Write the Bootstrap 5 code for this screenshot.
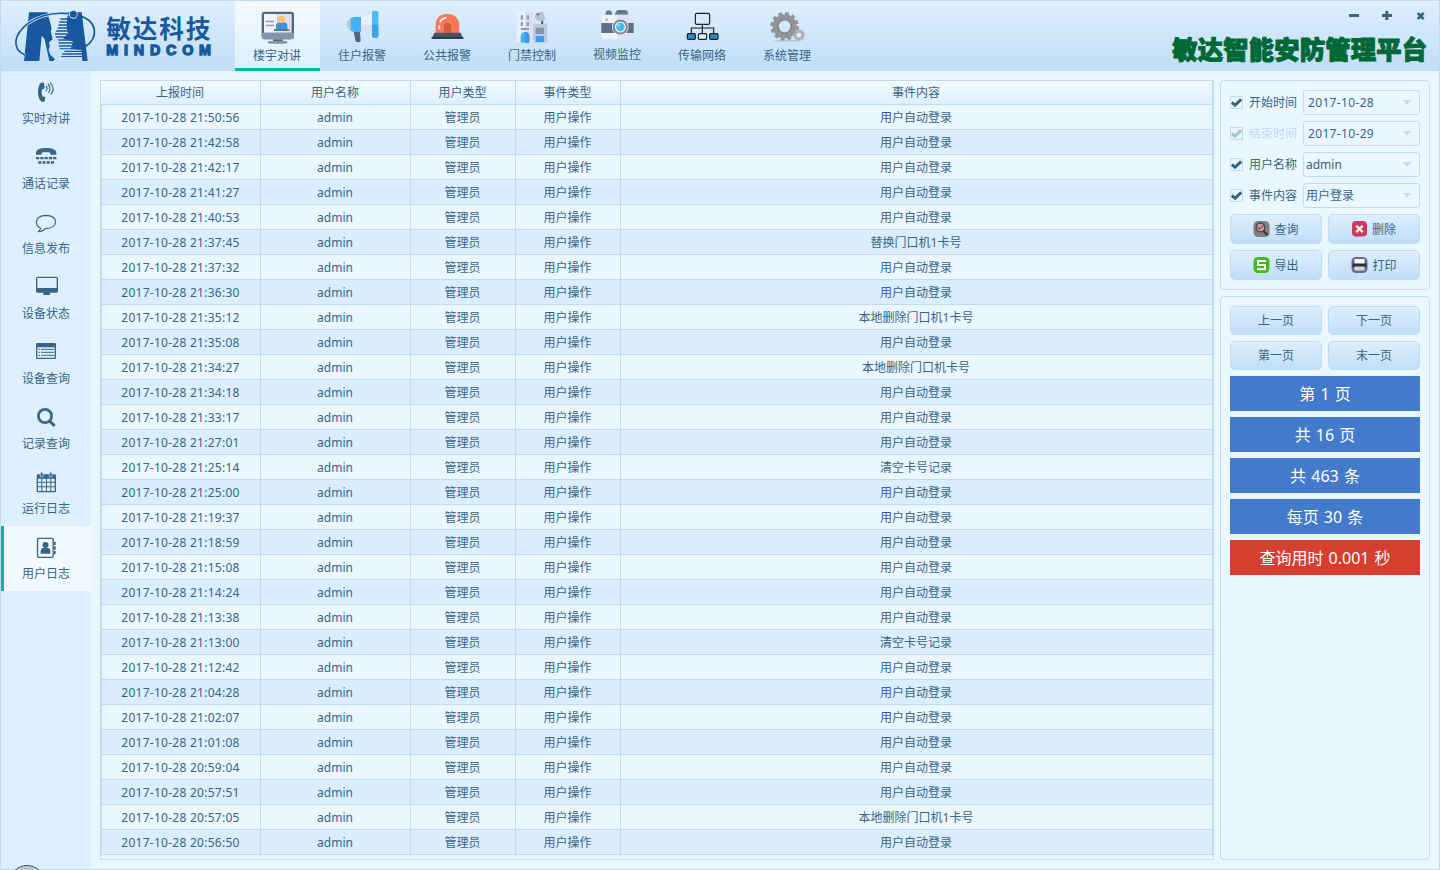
<!DOCTYPE html>
<html lang="zh-CN">
<head>
<meta charset="utf-8">
<title>敏达智能安防管理平台</title>
<meta name="viewport" content="width=device-width, initial-scale=1">
<link rel="stylesheet" href="https://cdn.jsdelivr.net/npm/bootstrap@5.3.0/dist/css/bootstrap.min.css">
<style>
:root{--line:#c0dcf2;--ink:#386487;--teal:#00bb9e}
body{font-family:"Noto Sans","Noto Sans CJK SC",sans-serif;font-size:12px;line-height:16px;color:var(--ink);background:#eaf7ff;overflow:hidden}
.window{height:870px;border:1px solid var(--line)}
.topbar{height:70px;background:linear-gradient(#deeffe,#c0def6)}
svg{display:block;flex:none}
.tab{width:85px;height:70px;color:var(--ink);text-align:center;text-decoration:none}
.tab.active{background:linear-gradient(#f3faff,#deeffe);border-bottom:3px solid var(--teal)}
.tab.raised span{margin-top:-1px}
.tab span{display:block;padding-right:1px}
.side{width:90px;background:#deeffe}
.side-item{height:65px;color:var(--ink);text-align:center;text-decoration:none;line-height:20px}
.side-item svg{fill:var(--ink)}
.side-item.active{background:#f2f9ff;box-shadow:inset 3px 0 var(--teal)}
.side-item span{display:block}
.grid-panel{width:1114px;border:1px solid var(--line)}
.log{width:1112px;table-layout:fixed;border-collapse:separate;border-spacing:0;text-align:center;margin:0}
.log th,.log td{padding:0 1px 0 0;border-right:1px solid var(--line);border-bottom:1px solid var(--line);font-weight:400;text-align:center}
.log th{height:24px;line-height:23px;background:linear-gradient(#f3faff,#deeffe)}
.log td{height:25px;line-height:22px;padding-top:2px}
.log td:first-child{border-left:1px solid var(--line)}
.log tbody tr:nth-child(even){background:#daeeff}
.num{letter-spacing:.26px}
.right{width:210px}
.box{border:1px solid var(--line);border-radius:4px;padding:9px;gap:6px}
.filter{height:25px}
.filter.off .lbl{color:#bfdcf3}
.tick{width:13px;height:13px;border:1px solid var(--line);color:var(--ink);margin-right:6px}
.lbl{width:54px;white-space:nowrap}
.combo{width:117px;height:25px;border:1px solid var(--line);border-radius:3px;padding:0 8px 0 2px}
.combo.num{padding-left:4px;letter-spacing:.34px}
.combo::after{content:"";border:4.5px solid transparent;border-top:5px solid var(--line);border-bottom:0}
.tool{width:92px;height:30px;padding:0;border:1px solid var(--line);border-radius:5px;background:linear-gradient(#deeffe,#c0def6);color:var(--ink);font-size:12px;line-height:16px}
.tool.act{padding-top:1px}
.tool.act svg{margin-top:-1px}
.tool.low{height:29px}
.bar{height:35px;line-height:36px;font-size:16px;text-align:center;color:#fff;background:#437acc;word-spacing:1px}
.bar.time{background:#d63e2f}
.orb{position:absolute;left:9px;top:865px;width:36px;height:36px;border:1px solid #2b587c;border-radius:50%;background:#b9c9d6}
</style>
</head>
<body>
<div class="window d-flex flex-column position-relative">
<header class="topbar d-flex flex-shrink-0">
  <svg width="234" height="70" viewBox="3 3 702 210">
    <g fill="#17589f">
      <path d="M87 37H142L150 66 155 86 152 94 158 118 147 127 149 140 146 150 151 164 165 178 160 183H148L134 118 125 107 118 183H72Z"/>
      <path d="M203 37H245L263 183H247L245 150 212 148 218 124 190 116 204 100 200 84Z"/>
      <path d="M182 55h22v4h-24zM178 64h28v4h-29zM176 73h28v4h-29zM174 82h28v4h-29zM169 91h34v4h-36zM165 100h38v4h-38zM167 109h32v4h-31zM174 118h42v4h-41zM176 127h40v4h-40zM177 136h38v4h-38zM179 145h36v3h-36zM194 152h52v4h-54zM188 160h60v4h-62zM184 168h66v3h-68z"/>
    </g>
    <path d="M76 166C32 145 42 103 84 70C116 48 160 38 206 43" fill="none" stroke="#d3e8fb" stroke-width="9"/>
    <path d="M76 166C32 145 42 103 84 70C116 48 160 36 206 41M234 46C294 62 298 112 254 141" fill="none" stroke="#17589f" stroke-width="5"/>
    <circle cx="220" cy="43" r="13" fill="#d3e8fb"/><circle cx="220" cy="43" r="10.500" fill="#17589f"/>
    <text x="319" y="114" font-family="Noto Sans CJK SC" font-weight="700" font-size="74" textLength="312" fill="#17589f">敏达科技</text>
    <text x="319" y="164" font-family="Liberation Sans" font-weight="700" font-size="43" textLength="314" stroke="#17589f" stroke-width="4" fill="#17589f">MINDCOM</text>
  </svg>
  <nav class="d-flex">
    <a class="tab active"><svg width="85" height="47" viewBox="15 3 255 141">
      <rect x="95" y="35" width="97" height="83" rx="9" fill="#52677f"/><path d="M95 98h97v11q0 9-9 9H104q-9 0-9-9z" fill="#8496a9"/>
      <path d="M102 42h41v56h-41z" fill="#f0f2fd"/><path d="M143 42h42v56h-42z" fill="#dde1f2"/>
      <path d="M107 62h25v5h-25zM107 74h25v5h-25z" fill="#8d9caf"/><path d="M138 88V78q0-11 12-11h10q12 0 12 11v10z" fill="#3f91e6"/><circle cx="155" cy="58" r="11" fill="#ffc36b"/>
      <path d="M132 87h46v6h-46z" fill="#65778c"/><path d="M129 118h29v6h-29z" fill="#52677f"/><rect x="114" y="123" width="58" height="8" rx="4" fill="#8496a9"/></svg><span>楼宇对讲</span></a>
    <a class="tab"><svg width="85" height="47" viewBox="270 3 255 141">
      <path d="M371 94h19l2 28q-1 5-8 5-7 0-8-6z" fill="#52677f"/><path d="M364 53q-14 8-14 20t14 20z" fill="#c0c7da"/><path d="M362 55l10-4h21v45h-21l-10-4z" fill="#46b1f5"/><path d="M393 51q18-1 34-12v35h-34z" fill="#eaeefd"/><path d="M393 74h34v32q-16-10-34-10z" fill="#dce1f1"/><rect x="426" y="32" width="19" height="82" rx="8" fill="#4cb8ff"/><path d="M426 74h19v32q0 8-9.500 8t-9.500-8z" fill="#3ea2e6"/></svg><span>住户报警</span></a>
    <a class="tab"><svg width="85" height="47" viewBox="525 3 255 141">
      <path d="M617 101V74q2-32 35-32t36 32v27z" fill="#fb7757"/><path d="M642 98V77q0-9 10-9t11 9v21z" fill="#d45b3b"/><path d="M628 88V76M630 67q4-11 19-14" stroke="#fff" stroke-width="5" fill="none"/><path d="M613 98h79l8 19h-95z" fill="#465464"/><path d="M605 111h95v6h-95z" fill="#2f3c4b"/></svg><span>公共报警</span></a>
    <a class="tab"><svg width="85" height="47" viewBox="-30 3 255 141">
      <rect x="50" y="34" width="50" height="94" rx="5" fill="#ebf0fe"/><path d="M75 34h20q5 0 5 5v89H75z" fill="#dbe1f3"/>
      <path d="M62 46h7v13h-7zM80 46h7v13h-7zM62 66h7v12h-7zM80 66h7v12h-7zM63 84h24v6H63z" fill="#8f9db1"/><path d="M62 128v-19q0-13 13-13t13 13v19z" fill="#46b1f5"/><path d="M75 96q13 0 13 13v19H75z" fill="#369be9"/>
      <rect x="99" y="71" width="43" height="57" rx="4" fill="#c0c9df"/><path d="M123 59h7v13h-7z" fill="#52677f"/><path d="M107 83h25v19h-25z" fill="#8292a8"/><path d="M107 108h25v18h-25z" fill="#4299f1"/><path d="M107 43q3-5 7-4l13-6q8 12 8 24-4 8-13 7-14-2-18-14z" fill="#b8c1d3"/><circle cx="114" cy="43" r="4" fill="#6c7c90"/></svg><span>门禁控制</span></a>
    <a class="tab raised"><svg width="85" height="47" viewBox="225 3 255 141">
      <path d="M317 47v-9q1-7 9-7t10 7v9zM343 47l5-12q2-5 7-5h21q5 0 7 5l3 12z" fill="#65788e"/><rect x="304" y="44" width="97" height="74" rx="12" fill="#edf2ff"/><path d="M352 44h37q12 0 12 12v50q0 12-12 12h-37z" fill="#dde3f3"/><path d="M304 69h97v30h-97z" fill="#5d7087"/><circle cx="320" cy="59" r="3.500" fill="#72cd3f"/><circle cx="361" cy="81" r="25" fill="#e2e9f5"/><circle cx="361" cy="81" r="22.500" fill="#75869c"/><circle cx="361" cy="81" r="16.500" fill="#edf3fc"/><circle cx="361" cy="81" r="12.500" fill="#40b9ee"/><circle cx="356" cy="76" r="4" fill="#8ddcfc"/></svg><span>视频监控</span></a>
    <a class="tab"><svg width="85" height="47" viewBox="480 3 255 141">
      <g fill="none" stroke="#171f28" stroke-width="3.500"><rect x="586" y="40" width="43" height="33" rx="5"/><path d="M607 73v27M574 100V84h67v16"/></g><g fill="#348ac4" stroke="#171f28" stroke-width="3.500"><rect x="562" y="101" width="24" height="17" rx="3"/><rect x="595" y="101" width="25" height="17" rx="3" fill="#e2eefa"/><rect x="629" y="101" width="25" height="17" rx="3"/></g></svg><span>传输网络</span></a>
    <a class="tab"><svg width="85" height="47" viewBox="735 3 255 141">
      <ellipse cx="862" cy="122" rx="42" ry="3" fill="#b4c7d7"/><circle cx="854" cy="79" r="27" fill="none" stroke="#929597" stroke-width="19"/><circle cx="854" cy="79" r="38.500" fill="none" stroke="#929597" stroke-width="9" stroke-dasharray="11.300 8.850"/><circle cx="854" cy="79" r="21" fill="none" stroke="#7d8082" stroke-width="3"/>
      <circle cx="897" cy="105" r="11" fill="none" stroke="#acafb1" stroke-width="8"/><circle cx="897" cy="105" r="15.500" fill="none" stroke="#acafb1" stroke-width="5" stroke-dasharray="5 4.740"/><circle cx="897" cy="105" r="7" fill="#e4edf4"/></svg><span>系统管理</span></a>
  </nav>
  <svg class="ms-auto" width="289" height="70" viewBox="0 3 867 210">
    <path d="M597 42h30v9h-30zM696 42h10V33h9v9h11v9h-11v9h-9v-9h-10z" fill="#386487"/><path d="M803 39l18 18M821 39l-18 18" stroke="#386487" stroke-width="8"/>
    <text x="67" y="177" font-family="Noto Sans CJK SC" font-weight="900" font-size="76" textLength="764" fill="#006837" stroke="#006837" stroke-width="3" stroke-linejoin="round">敏达智能安防管理平台</text>
  </svg>
</header>
<div class="d-flex flex-grow-1">
  <aside class="side d-flex flex-column">
    <a class="side-item"><svg width="90" height="38" viewBox="3 3 270 114"><path d="M121 40q8-5 11 0l2 13q-2 5-8 5-4 11 2 22 6-2 8 3l-2 11q-5 4-11 0-8-9-9-26 0-18 7-28z"/><path d="M138 48q6 7 0 15M144 42q11 13 1 27M150 38q18 18 2 36" fill="none" stroke="#386487" stroke-width="3.500"/></svg><span>实时对讲</span></a>
    <a class="side-item"><svg width="90" height="38" viewBox="3 198 270 114"><path d="M108 254v-8q3-12 30-12t31 12v8h-17l-3-7h-22l-3 7z"/><path d="M108 264.500h61" stroke="#386487" stroke-width="7" stroke-dasharray="9.600 3.250"/><path d="M115 277.500h47" stroke="#386487" stroke-width="8" stroke-dasharray="9 3.600"/></svg><span>通话记录</span></a>
    <a class="side-item"><svg width="90" height="38" viewBox="3 393 270 114"><path d="M122 475Q109 468 109 456q2-19 29-20 28 1 29 20-2 19-31 20-8 9-22 9 6-3 8-10z" fill="none" stroke="#386487" stroke-width="3.500"/></svg><span>信息发布</span></a>
    <a class="side-item"><svg width="90" height="38" viewBox="3 588 270 114"><path fill-rule="evenodd" d="M113 620h56q5 0 5 5v38q0 5-5 5h-20l1 4v3h-20v-3l1-4h-18q-5 0-5-5v-38q0-5 5-5zm-1 4v30h58v-30z"/></svg><span>设备状态</span></a>
    <a class="side-item"><svg width="90" height="38" viewBox="3 3 270 114"><path fill-rule="evenodd" d="M112 39h52q4 0 4 4v40q0 4-4 4h-52q-4 0-4-4V43q0-4 4-4zm0 13v31h52V52z"/><path d="M115 58h5M123 58h39M115 67h5M123 67h39M115 76h5M123 76h39" stroke="#386487" stroke-width="3"/></svg><span>设备查询</span></a>
    <a class="side-item"><svg width="90" height="38" viewBox="3 198 270 114"><circle cx="135" cy="258" r="20" fill="none" stroke="#386487" stroke-width="8"/><path d="M149 273l15 15" stroke="#386487" stroke-width="9"/></svg><span>记录查询</span></a>
    <a class="side-item"><svg width="90" height="38" viewBox="3 393 270 114"><path fill-rule="evenodd" d="M114 433h50q4 0 4 4v46q0 4-4 4h-50q-4 0-4-4v-46q0-4 4-4zm0 13v9h10v-9zm13 0v9h11v-9zm14 0v9h10v-9zm13 0v9h10v-9zm-40 12v11h10v-11zm13 0v11h11v-11zm14 0v11h10v-11zm13 0v11h10v-11zm-40 14v11h10v-11zm13 0v11h11v-11zm14 0v11h10v-11zm13 0v11h10v-11z"/><rect x="121" y="427" width="8" height="14" rx="3" stroke="#deeffe" stroke-width="2"/><rect x="148" y="427" width="8" height="14" rx="3" stroke="#deeffe" stroke-width="2"/></svg><span>运行日志</span></a>
    <a class="side-item active"><svg width="90" height="38" viewBox="3 588 270 114"><rect x="112.500" y="625" width="47" height="57" rx="3" fill="none" stroke="#386487" stroke-width="4"/><path d="M162 635h5v10h-5zM162 649h5v10h-5zM162 663h5v10h-5zM122 671v-9q1-8 8-8h13q8 0 8 8v9z"/><circle cx="136.500" cy="645" r="9"/></svg><span>用户日志</span></a>
  </aside>
  <main class="d-flex flex-grow-1" style="padding:9px;gap:6px">
    <section class="grid-panel">
      <table class="log">
        <colgroup><col style="width:160px"><col style="width:150px"><col style="width:105px"><col style="width:105px"><col></colgroup>
        <thead><tr><th>上报时间</th><th>用户名称</th><th>用户类型</th><th>事件类型</th><th>事件内容</th></tr></thead>
        <tbody id="rows"></tbody>
      </table>
    </section>
    <aside class="right d-flex flex-column" style="gap:6px">
      <div class="box d-flex flex-column">
        <div class="filter d-flex align-items-center"><i class="tick"><svg width="11" height="11" viewBox="0 0 11 11"><path d="M.8 5.500L4 8.300 10.200 2.400" fill="none" stroke="currentColor" stroke-width="3"/></svg></i><span class="lbl">开始时间</span><div class="combo num d-flex align-items-center justify-content-between">2017-10-28</div></div>
        <div class="filter off d-flex align-items-center"><i class="tick"><svg width="11" height="11" viewBox="0 0 11 11"><path d="M.8 5.500L4 8.300 10.200 2.400" fill="none" stroke="#a5c3dc" stroke-width="3"/></svg></i><span class="lbl">结束时间</span><div class="combo num d-flex align-items-center justify-content-between">2017-10-29</div></div>
        <div class="filter d-flex align-items-center"><i class="tick"><svg width="11" height="11" viewBox="0 0 11 11"><path d="M.8 5.500L4 8.300 10.200 2.400" fill="none" stroke="currentColor" stroke-width="3"/></svg></i><span class="lbl">用户名称</span><div class="combo d-flex align-items-center justify-content-between">admin</div></div>
        <div class="filter d-flex align-items-center"><i class="tick"><svg width="11" height="11" viewBox="0 0 11 11"><path d="M.8 5.500L4 8.300 10.200 2.400" fill="none" stroke="currentColor" stroke-width="3"/></svg></i><span class="lbl">事件内容</span><div class="combo d-flex align-items-center justify-content-between">用户登录</div></div>
        <div class="d-flex justify-content-between">
          <button class="tool act d-flex align-items-center justify-content-center"><svg class="me-1" width="17" height="17" viewBox="0 0 17 17"><rect x=".5" y="0" width="16" height="16" rx="4.500" fill="#7f7f7f"/><circle cx="7.500" cy="6.500" r="4.300" fill="#a9a9a9" stroke="#444" stroke-width="1.300"/><path d="M10.500 10l4 4" stroke="#333" stroke-width="2"/><path d="M4.500 6l2 2L11 4" fill="none" stroke="#d83a3a" stroke-width="1.300"/></svg>查询</button>
          <button class="tool act d-flex align-items-center justify-content-center"><svg class="me-1" width="16" height="17" viewBox="0 0 16 17"><rect x="0" y="0" width="15" height="15.500" rx="4" fill="#ce395e"/><path d="M4.300 4.700l6.400 6.400M10.700 4.700l-6.400 6.400" stroke="#fff" stroke-width="2.300"/></svg>删除</button>
        </div>
        <div class="d-flex justify-content-between">
          <button class="tool act d-flex align-items-center justify-content-center"><svg class="me-1" width="17" height="17" viewBox="0 0 17 17"><rect x=".5" y="0" width="16" height="16" rx="4.500" fill="#42b824"/><path d="M13 4H5v4h7v4.300H4" fill="none" stroke="#fff" stroke-width="2"/></svg>导出</button>
          <button class="tool act d-flex align-items-center justify-content-center"><svg class="me-1" width="17" height="17" viewBox="0 0 17 17"><rect x=".5" y="0" width="16" height="16" rx="4.500" fill="#666b98"/><path d="M3.500 2h10v5h-10z" fill="#f5f5f7"/><path d="M1.500 6.500h14V10h-14z" fill="#2b2b31"/><path d="M3.500 9.500h10v4h-10z" fill="#d6d6da"/></svg>打印</button>
        </div>
      </div>
      <div class="box d-flex flex-column flex-grow-1">
        <div class="d-flex justify-content-between"><button class="tool low">上一页</button><button class="tool low">下一页</button></div>
        <div class="d-flex justify-content-between"><button class="tool low">第一页</button><button class="tool low">末一页</button></div>
        <div class="bar">第 1 页</div>
        <div class="bar">共 16 页</div>
        <div class="bar">共 463 条</div>
        <div class="bar">每页 30 条</div>
        <div class="bar time">查询用时 0.001 秒</div>
      </div>
    </aside>
  </main>
</div>
</div>
<div class="orb"></div>
<script src="https://cdn.jsdelivr.net/npm/bootstrap@5.3.0/dist/js/bootstrap.bundle.min.js"></script>
<script>
const times = ["21:50:56","21:42:58","21:42:17","21:41:27","21:40:53","21:37:45","21:37:32","21:36:30","21:35:12","21:35:08","21:34:27","21:34:18","21:33:17","21:27:01","21:25:14","21:25:00","21:19:37","21:18:59","21:15:08","21:14:24","21:13:38","21:13:00","21:12:42","21:04:28","21:02:07","21:01:08","20:59:04","20:57:51","20:57:05","20:56:50"];
const special = {5:"替换门口机1卡号",8:"本地删除门口机1卡号",10:"本地删除门口机卡号",14:"清空卡号记录",21:"清空卡号记录",28:"本地删除门口机1卡号"};
document.getElementById("rows").innerHTML = times.map((t, i) =>
  `<tr><td class="num">2017-10-28 ${t}</td><td>admin</td><td>管理员</td><td>用户操作</td><td>${special[i] || "用户自动登录"}</td></tr>`).join("");
</script>
</body>
</html>
